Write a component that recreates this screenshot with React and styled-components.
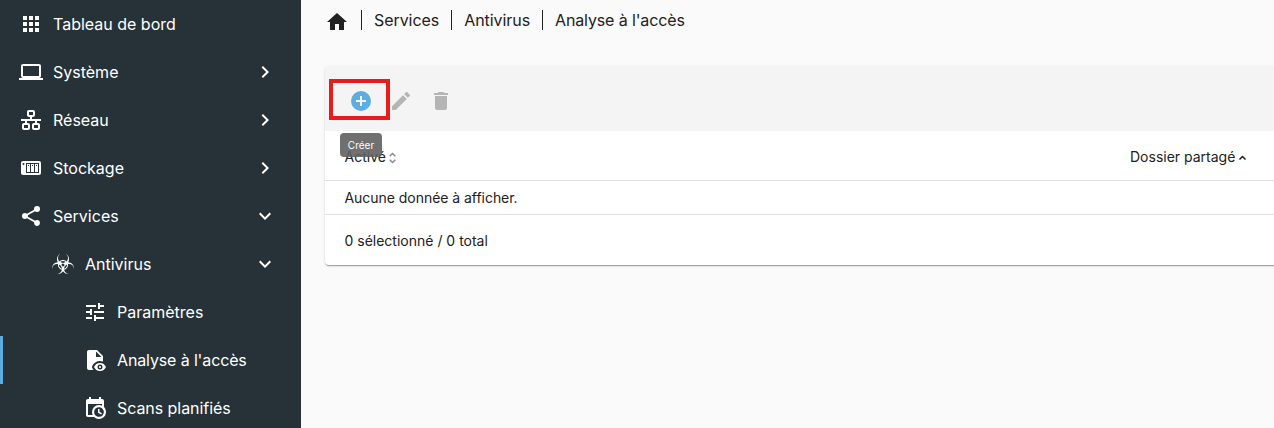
import React from "react";
import styled, { createGlobalStyle } from "styled-components";

const GlobalStyle = createGlobalStyle`
  * { box-sizing: border-box; }
  html, body { margin: 0; padding: 0; overflow: hidden; }
  body {
    font-family: Inter, "Liberation Sans", sans-serif;
    font-size: 14px;
    color: #212121;
    background: #fafafa;
  }
`;

const icons = {
  apps: "M16,20H20V16H16M16,14H20V10H16M10,8H14V4H10M16,8H20V4H16M10,14H14V10H10M4,14H8V10H4M4,20H8V16H4M10,20H14V16H10M4,8H8V4H4V8Z",
  laptop: "M4,6H20V16H4M20,18A2,2 0 0,0 22,16V6C22,4.89 21.1,4 20,4H4C2.89,4 2,4.89 2,6V16A2,2 0 0,0 4,18H0V20H24V18H20Z",
  lan: "M10,2C8.89,2 8,2.89 8,4V7C8,8.11 8.89,9 10,9H11V11H2V13H6V15H5C3.89,15 3,15.89 3,17V20C3,21.11 3.89,22 5,22H9C10.11,22 11,21.11 11,20V17C11,15.89 10.11,15 9,15H8V13H16V15H15C13.89,15 13,15.89 13,17V20C13,21.11 13.89,22 15,22H19C20.11,22 21,21.11 21,20V17C21,15.89 20.11,15 19,15H18V13H22V11H13V9H14C15.11,9 16,8.11 16,7V4C16,2.89 15.11,2 14,2H10M10,4H14V7H10V4M5,17H9V20H5V17M15,17H19V20H15V17Z",
  nas: "M4,5C2.89,5 2,5.89 2,7V17C2,18.11 2.89,19 4,19H20C21.11,19 22,18.11 22,17V7C22,5.89 21.11,5 20,5H4M4.5,7A1,1 0 0,1 5.5,8A1,1 0 0,1 4.5,9A1,1 0 0,1 3.5,8A1,1 0 0,1 4.5,7M7,7H20V17H7V7M8,8V16H11V8H8M12,8V16H15V8H12M16,8V16H19V8H16M9,9H10V10H9V9M13,9H14V10H13V9M17,9H18V10H17V9Z",
  share: "M18,16.08C17.24,16.08 16.56,16.38 16.04,16.85L8.91,12.7C8.96,12.47 9,12.24 9,12C9,11.76 8.96,11.53 8.91,11.3L15.96,7.19C16.5,7.69 17.21,8 18,8A3,3 0 0,0 21,5A3,3 0 0,0 18,2A3,3 0 0,0 15,5C15,5.24 15.04,5.47 15.09,5.7L8.04,9.81C7.5,9.31 6.79,9 6,9A3,3 0 0,0 3,12A3,3 0 0,0 6,15C6.79,15 7.5,14.69 8.04,14.19L15.16,18.34C15.11,18.55 15.08,18.77 15.08,19C15.08,20.61 16.39,21.91 18,21.91C19.61,21.91 20.92,20.61 20.92,19A2.92,2.92 0 0,0 18,16.08Z",
  biohazard: "M23,16.06C23,16.29 23,16.5 22.96,16.7C22.78,14.14 20.64,12.11 18,12.11C17.63,12.11 17.27,12.16 16.92,12.23C16.96,12.5 17,12.73 17,13C17,15.35 15.31,17.32 13.07,17.81C13.42,20.05 15.31,21.79 17.65,21.96C17.43,22 17.22,22 17,22C14.92,22 13.07,20.94 12,19.34C10.93,20.94 9.09,22 7,22C6.78,22 6.57,22 6.35,21.96C8.69,21.79 10.57,20.06 10.93,17.81C8.68,17.32 7,15.35 7,13C7,12.73 7.04,12.5 7.07,12.23C6.73,12.16 6.37,12.11 6,12.11C3.36,12.11 1.22,14.14 1.03,16.7C1,16.5 1,16.29 1,16.06C1,12.85 3.59,10.24 6.81,10.14C6.3,9.27 6,8.25 6,7.17C6,4.94 7.23,3 9.06,2C7.81,2.9 7,4.34 7,6C7,7.35 7.56,8.59 8.47,9.5C9.38,8.59 10.62,8.04 12,8.04C13.37,8.04 14.62,8.59 15.5,9.5C16.43,8.59 17,7.35 17,6C17,4.34 16.18,2.9 14.94,2C16.77,3 18,4.94 18,7.17C18,8.25 17.7,9.27 17.19,10.14C20.42,10.24 23,12.85 23,16.06M9.27,10.11C10.05,10.62 11,10.92 12,10.92C13,10.92 13.95,10.62 14.73,10.11C14,9.45 13.06,9.03 12,9.03C10.94,9.03 10,9.45 9.27,10.11M12,14.47C12.82,14.47 13.5,13.8 13.5,13A1.5,1.5 0 0,0 12,11.5A1.5,1.5 0 0,0 10.5,13C10.5,13.8 11.17,14.47 12,14.47M10.97,16.79C10.87,14.9 9.71,13.29 8.05,12.55C8.03,12.7 8,12.84 8,13C8,14.82 9.27,16.34 10.97,16.79M15.96,12.55C14.29,13.29 13.12,14.9 13,16.79C14.73,16.34 16,14.82 16,13C16,12.84 15.97,12.7 15.96,12.55Z",
  tune: "M3,17V19H9V17H3M3,5V7H13V5H3M13,21V19H21V17H13V15H11V21H13M7,9V11H3V13H7V15H9V9H7M21,13V11H11V13H21M15,9H17V7H21V5H17V3H15V9Z",
  fileEye: "M17,18C17.56,18 18,18.44 18,19C18,19.56 17.56,20 17,20C16.44,20 16,19.56 16,19C16,18.44 16.44,18 17,18M17,15C14.27,15 11.94,16.66 11,19C11.94,21.34 14.27,23 17,23C19.73,23 22.06,21.34 23,19C22.06,16.66 19.73,15 17,15M17,21.5A2.5,2.5 0 0,1 14.5,19A2.5,2.5 0 0,1 17,16.5A2.5,2.5 0 0,1 19.5,19A2.5,2.5 0 0,1 17,21.5M9.14,19.75L8.85,19L9.14,18.26C10.43,15.06 13.5,13 17,13C18.05,13 19.06,13.21 20,13.56V8L14,2H6C4.89,2 4,2.89 4,4V20C4,21.11 4.9,22 6,22H10.5C9.95,21.34 9.5,20.58 9.14,19.75M13,3.5L18.5,9H13V3.5Z",
  calendarClock: "M15,13H16.5V15.82L18.94,17.23L18.19,18.53L15,16.69V13M19,8H5V19H9.67C9.24,18.09 9,17.07 9,16A7,7 0 0,1 16,9C17.07,9 18.09,9.24 19,9.67V8M5,21C3.89,21 3,20.1 3,19V5C3,3.89 3.89,3 5,3H6V1H8V3H16V1H18V3H19A2,2 0 0,1 21,5V11.1C22.24,12.36 23,14.09 23,16A7,7 0 0,1 16,23C14.09,23 12.36,22.24 11.1,21H5M16,11.15A4.85,4.85 0 0,0 11.15,16C11.15,18.68 13.32,20.85 16,20.85A4.85,4.85 0 0,0 20.85,16C20.85,13.32 18.68,11.15 16,11.15Z",
  right: "M8.59,16.58L13.17,12L8.59,7.41L10,6L16,12L10,18L8.59,16.58Z",
  down: "M7.41,8.58L12,13.17L16.59,8.58L18,10L12,16L6,10L7.41,8.58Z",
  home: "M10,20V14H14V20H19V12H22L12,3L2,12H5V20H10Z",
  plus: "M17,13H13V17H11V13H7V11H11V7H13V11H17M12,2A10,10 0 0,0 2,12A10,10 0 0,0 12,22A10,10 0 0,0 22,12A10,10 0 0,0 12,2Z",
  pencil: "M20.71,7.04C21.1,6.65 21.1,6 20.71,5.63L18.37,3.29C18,2.9 17.35,2.9 16.96,3.29L15.12,5.12L18.87,8.87M3,17.25V21H6.75L17.81,9.93L14.06,6.18L3,17.25Z",
  trash: "M19,4H15.5L14.5,3H9.5L8.5,4H5V6H19M6,19A2,2 0 0,0 8,21H16A2,2 0 0,0 18,19V7H6V19Z",
};

const Svg = styled.svg`
  display: block;
  flex: none;
  width: 24px;
  height: 24px;
  fill: currentColor;
`;

const Icon = ({ name }) => (
  <Svg viewBox="0 0 24 24"><path d={icons[name]} /></Svg>
);

const Shell = styled.div`
  display: flex;
  width: 100%;
  height: 428px;
  overflow: hidden;
`;

const Sidebar = styled.nav`
  flex: none;
  width: 301px;
  background: #263238;
  color: #fff;
`;

const NavItem = styled.a`
  display: flex;
  align-items: center;
  gap: 10px;
  height: 48px;
  padding: 0 24px 0 ${(p) => 16 + p.$level * 32}px;
  border-left: 3px solid ${(p) => (p.$active ? "#5dade2" : "transparent")};
  font-size: 16px;
  line-height: 24px;
`;

const NavLabel = styled.span`
  flex: 1;
  white-space: nowrap;
  letter-spacing: ${(p) => p.$tracking || "normal"};
`;

const Main = styled.main`
  flex: 1;
  min-width: 0;
  padding: 10px 0 0 24px;
`;

const Breadcrumb = styled.div`
  display: flex;
  align-items: center;
  height: 20px;
  font-size: 16px;
`;

const HomeLink = styled.a`
  display: flex;
  height: 24px;
  margin: 4px 12px 0 0;
`;

const Crumb = styled.a`
  height: 20px;
  line-height: 20px;
  padding-left: 12px;
  margin-right: 12px;
  border-left: 1px solid #212121;
  white-space: nowrap;
  letter-spacing: ${(p) => p.$tracking || "-0.06px"};
`;

const Card = styled.section`
  width: 965px;
  margin-top: 36px;
  border-radius: 4px;
  background: #fff;
  box-shadow: 0 2px 1px -1px rgba(0, 0, 0, 0.2), 0 1px 1px rgba(0, 0, 0, 0.14),
    0 1px 3px rgba(0, 0, 0, 0.12);
`;

const Toolbar = styled.div`
  display: flex;
  align-items: center;
  height: 65px;
  padding: 4px 16px 0;
  border-radius: 4px 0 0 0;
  background: #f4f4f4;
`;

const ToolButton = styled.button`
  position: relative;
  display: flex;
  align-items: center;
  justify-content: center;
  width: 40px;
  height: 40px;
  padding: 0;
  border: 0;
  background: none;
  color: ${(p) => (p.$primary ? "#5dade2" : "#b5b5b5")};
`;

const Highlight = styled.span`
  position: absolute;
  left: -12px;
  top: -2px;
  width: 61px;
  height: 41px;
  border: 4px solid #e81c1c;
`;

const Tooltip = styled.span`
  position: absolute;
  z-index: 1;
  left: -1px;
  top: 52px;
  width: 42px;
  height: 24px;
  border-radius: 4px;
  background: rgba(97, 97, 97, 0.9);
  color: #fff;
  font: 10px/25px Inter, sans-serif;
  text-align: center;
`;

const HeaderRow = styled.div`
  display: flex;
  align-items: center;
  height: 50px;
  padding: 2px 0 0 19.5px;
  border-bottom: 1px solid #e0e0e0;
`;

const HeaderCell = styled.div`
  display: flex;
  align-items: center;
  gap: 3px;
  width: ${(p) => p.$width || "auto"};
  white-space: nowrap;
`;

const SortSvg = styled.svg`
  display: block;
  width: 9px;
  height: 12px;
  margin-top: 2px;
  margin-left: ${(p) => (p.$active ? 0 : -1)}px;
  fill: none;
  stroke: ${(p) => (p.$active ? "#212121" : "#8b8b8b")};
  stroke-width: 1.5;
`;

const EmptyRow = styled.div`
  height: 34px;
  padding-left: 19.5px;
  border-bottom: 1px solid #e0e0e0;
  line-height: 34px;
  letter-spacing: -0.04px;
`;

const Footer = styled.div`
  height: 50px;
  padding-left: 19.5px;
  line-height: 52px;
`;

const items = [
  { icon: "apps", label: "Tableau de bord", level: 0 },
  { icon: "laptop", label: "Système", level: 0, arrow: "right" },
  { icon: "lan", label: "Réseau", level: 0, arrow: "right" },
  { icon: "nas", label: "Stockage", level: 0, arrow: "right" },
  { icon: "share", label: "Services", level: 0, arrow: "down" },
  { icon: "biohazard", label: "Antivirus", level: 1, arrow: "down" },
  { icon: "tune", label: "Paramètres", level: 2 },
  { icon: "fileEye", label: "Analyse à l'accès", level: 2, active: true, tracking: "-0.13px" },
  { icon: "calendarClock", label: "Scans planifiés", level: 2, tracking: "-0.06px" },
];

export default function App() {
  return (
    <>
      <GlobalStyle />
      <Shell>
        <Sidebar>
          {items.map((item) => (
            <NavItem key={item.label} $level={item.level} $active={item.active}>
              <Icon name={item.icon} />
              <NavLabel $tracking={item.tracking}>{item.label}</NavLabel>
              {item.arrow && <Icon name={item.arrow} />}
            </NavItem>
          ))}
        </Sidebar>
        <Main>
          <Breadcrumb>
            <HomeLink><Icon name="home" /></HomeLink>
            <Crumb>Services</Crumb>
            <Crumb>Antivirus</Crumb>
            <Crumb $tracking="-0.13px">Analyse à l'accès</Crumb>
          </Breadcrumb>
          <Card>
            <Toolbar>
              <ToolButton $primary>
                <Icon name="plus" />
                <Highlight />
                <Tooltip>Créer</Tooltip>
              </ToolButton>
              <ToolButton><Icon name="pencil" /></ToolButton>
              <ToolButton><Icon name="trash" /></ToolButton>
            </Toolbar>
            <HeaderRow>
              <HeaderCell $width="785.5px">
                Activé
                <SortSvg viewBox="0 0 9 12"><path d="M1.7 4.2L4.5 1.5L7.3 4.2M1.7 7.8L4.5 10.5L7.3 7.8" /></SortSvg>
              </HeaderCell>
              <HeaderCell>
                Dossier partagé
                <SortSvg $active viewBox="0 0 9 12"><path d="M1.5 7.5L4.5 4.5L7.5 7.5" /></SortSvg>
              </HeaderCell>
            </HeaderRow>
            <EmptyRow>Aucune donnée à afficher.</EmptyRow>
            <Footer>0 sélectionné / 0 total</Footer>
          </Card>
        </Main>
      </Shell>
    </>
  );
}
